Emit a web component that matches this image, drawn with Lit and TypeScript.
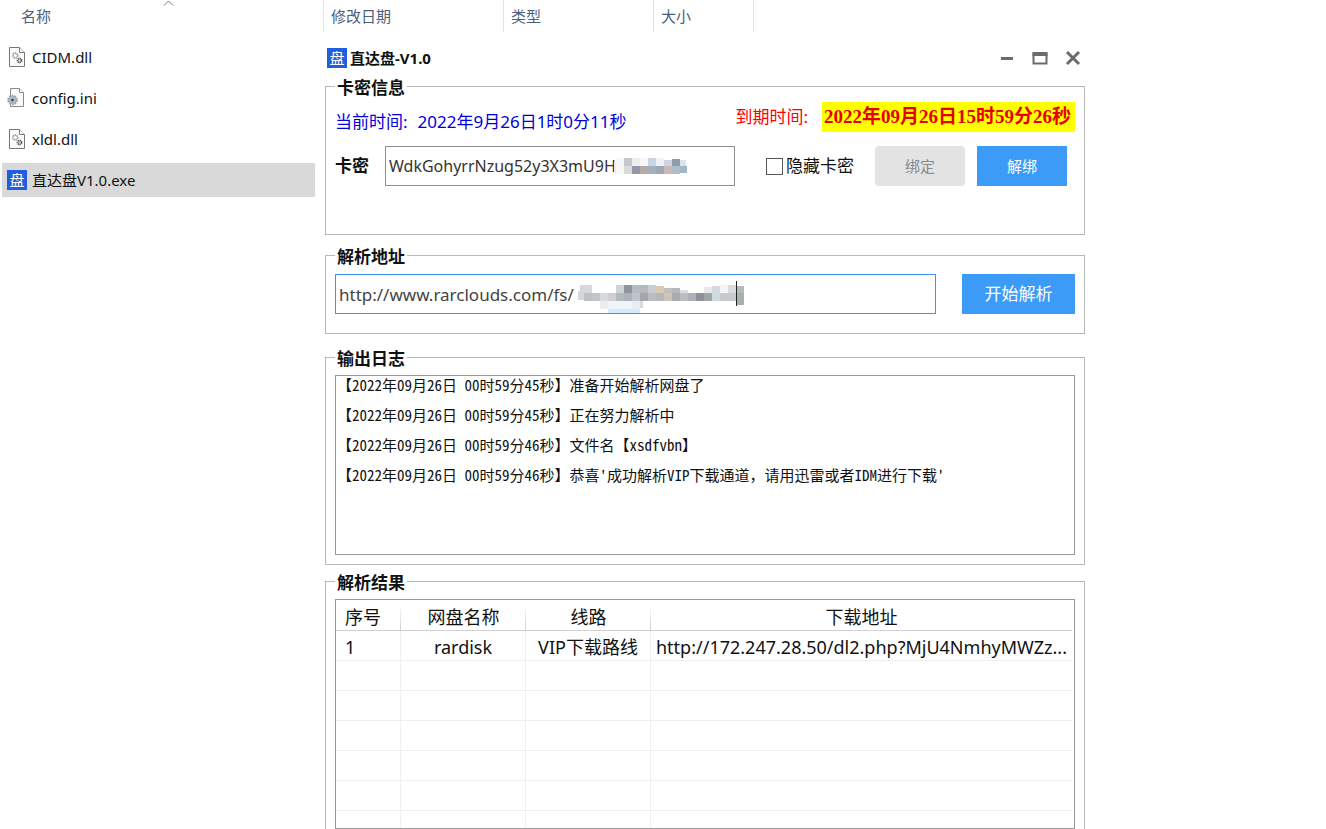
import { LitElement, html, css, svg } from "lit";
import { customElement } from "lit/decorators.js";

const dllIcon = html`<svg class="icon" viewBox="0 0 20 20" aria-hidden="true">
  <path d="M2.5 .5h10l5 5v14h-15z" fill="#fafafa" stroke="#777"/>
  <path d="M12.5 .5v5h5" fill="#fff" stroke="#777"/>
  <circle cx="8.300" cy="8.500" r="2.400" fill="none" stroke="#8d969c" stroke-width="1.600" stroke-dasharray="1.300 .6"/>
  <circle cx="12.500" cy="13.500" r="2" fill="#dde" stroke="#59636a" stroke-width="1.800" stroke-dasharray="1.200 .5"/>
</svg>`;

const iniIcon = html`<svg class="icon" viewBox="0 0 20 20" aria-hidden="true">
  <path d="M3.500 .5h9l4 4v14h-13z" fill="#fafafa" stroke="#8a8a8a"/>
  <path d="M12.500 .5v4h4" fill="#fff" stroke="#8a8a8a"/>
  <circle cx="5.500" cy="12" r="4.300" fill="#b9c5cb" stroke="#94a0a6" stroke-width="2" stroke-dasharray="1.700 1"/>
  <circle cx="5.500" cy="12" r="3.200" fill="#a9b8bf"/>
  <circle cx="5.500" cy="12" r="1.300" fill="#37454d"/>
</svg>`;

const brandIcon = html`<span class="brand" aria-hidden="true">盘</span>`;

const files = [
  { name: "CIDM.dll", icon: dllIcon },
  { name: "config.ini", icon: iniIcon },
  { name: "xldl.dll", icon: dllIcon },
  { name: "直达盘V1.0.exe", icon: brandIcon, selected: true },
];

const logs = [
  "【2022年09月26日 00时59分45秒】准备开始解析网盘了",
  "【2022年09月26日 00时59分45秒】正在努力解析中",
  "【2022年09月26日 00时59分46秒】文件名【xsdfvbn】",
  "【2022年09月26日 00时59分46秒】恭喜'成功解析VIP下载通道，请用迅雷或者IDM进行下载'",
];

type Block = [number, number, number, number, string];

const keyBlocks: Block[] = [
  [2, 4, 2, 12, "#e9ecee"], [4, 0, 8, 16, "#f7f7f8"],
  [12, 0, 8, 8, "#c3c7cb"], [20, 0, 8, 8, "#ededee"], [28, 0, 8, 8, "#f8f8f8"],
  [36, 0, 8, 8, "#c7d6e6"], [44, 0, 8, 8, "#eff1f4"], [52, 2, 8, 6, "#cdd4e0"],
  [60, 1, 8, 7, "#8f9da6"], [68, 2, 6, 6, "#d9e4ec"],
  [12, 8, 8, 8, "#dcd9da"], [20, 8, 8, 8, "#9497a6"], [28, 8, 8, 8, "#b5aca9"],
  [36, 8, 8, 8, "#a4b1bd"], [44, 8, 8, 8, "#9fa9b4"], [52, 8, 8, 8, "#c9b9bb"],
  [60, 8, 8, 8, "#b1bccb"], [68, 8, 7, 7, "#a3b6c8"],
];

// The last entry is the text caret.
const urlBlocks: Block[] = [
  [2, 4, 12, 8, "#d6d8da"], [38, 4, 8, 8, "#cdd3d6"], [46, 4, 8, 8, "#8f939c"],
  [54, 4, 8, 8, "#b5bbc0"], [62, 4, 8, 8, "#b4b9be"], [70, 4, 8, 8, "#c9ced2"],
  [78, 5, 8, 7, "#dccab5"], [86, 7, 8, 5, "#c0bfbb"], [94, 7, 8, 5, "#b7b7b7"],
  [102, 9, 8, 3, "#dcdddf"], [126, 6, 8, 6, "#e8e8e8"], [134, 5, 8, 7, "#d5d9df"],
  [142, 4, 8, 8, "#f4f4f4"], [150, 4, 8, 8, "#dcdcda"], [158, 5, 8, 7, "#b5baba"],
  [0, 10, 6, 9, "#d5d7da"], [6, 12, 8, 8, "#bcc1c6"], [14, 12, 8, 8, "#c1c6cb"],
  [22, 12, 8, 8, "#d8d9dc"], [30, 12, 8, 8, "#d0d0d2"], [38, 12, 8, 8, "#b7b8ba"],
  [46, 12, 8, 8, "#aeb2b5"], [54, 12, 8, 8, "#bfc5ca"], [62, 12, 8, 8, "#a4a5a8"],
  [70, 12, 8, 8, "#b8bdc2"], [78, 12, 8, 8, "#b5b7ba"], [86, 12, 8, 8, "#cdc4bb"],
  [94, 12, 8, 8, "#a8acb0"], [102, 12, 8, 8, "#bcbdc2"], [110, 12, 8, 8, "#adb0b4"],
  [118, 12, 8, 8, "#8f9098"], [126, 12, 8, 8, "#a0a4a7"], [134, 12, 8, 8, "#cfd9e0"],
  [142, 12, 8, 8, "#c8c9c9"], [150, 12, 8, 8, "#c6cbd2"], [158, 12, 8, 12, "#a9afaf"],
  [22, 20, 8, 8, "#ececec"], [30, 20, 8, 8, "#f0f4f7"], [38, 20, 16, 10, "#eff6fb"],
  [54, 20, 8, 10, "#e4eef6"], [62, 20, 3, 7, "#d7dade"], [30, 28, 32, 4, "#d4eafd"],
  [158, 0, 1, 25, "#222"],
];

const mosaic = (cls: string, w: number, h: number, blocks: Block[]) => html`
  <svg class=${cls} width=${w} height=${h} viewBox="0 0 ${w} ${h}" aria-hidden="true">
    ${blocks.map(([x, y, bw, bh, c]) => svg`<rect x=${x} y=${y} width=${bw} height=${bh} fill=${c}></rect>`)}
  </svg>`;

@customElement("app-root")
export class AppRoot extends LitElement {
  static styles = css`
    :host {
      display: block;
      height: 100vh;
      overflow: hidden;
      background: #fff;
      color: #111;
      font: 17px/24px "Noto Sans", "Noto Sans CJK SC", sans-serif;
    }
    * { box-sizing: border-box; }
    button, input { font: inherit; }
    .columns {
      display: grid;
      grid-template-columns: 323fr 180fr 150fr 100fr 573fr;
      height: 32px;
      color: #4c607a;
      font-size: 15px;
      line-height: 32px;
    }
    .columns span { padding-left: 7px; border-left: 1px solid #e2e2e2; }
    .columns .first { padding-left: 21px; border-left: 0; position: relative; }
    .sort { position: absolute; left: 163px; top: 0; display: block; }
    .body { display: grid; grid-template-columns: 325fr 760fr 241fr; }
    .files { margin: 0; padding: 8px 10px 0 2px; list-style: none; display: grid; gap: 7px; align-content: start; }
    .file { display: flex; align-items: center; gap: 5px; height: 34px; padding-left: 5px; font-size: 15px; }
    .file.selected { background: #d9d9d9; }
    .icon { width: 20px; height: 20px; flex: none; }
    .brand {
      width: 20px; height: 20px; flex: none;
      background: #1f5ee0; color: #fff;
      font-size: 15px; font-weight: 400; line-height: 20px; text-align: center;
    }
    .titlebar { display: flex; align-items: center; height: 42px; padding: 10px 0 0 2px; font-size: 15px; font-weight: 700; }
    .titlebar h1 { margin: 0 auto 0 3px; font: inherit; }
    .winbtn { width: 24px; height: 24px; margin-left: 9px; padding: 0; border: 0; background: none; display: grid; place-items: center; }
    fieldset { margin: 0; min-width: 0; padding: 0 9px; border: 1px solid #b8b8b8; }
    legend { padding: 4px 2px 0; font-weight: 700; line-height: 20px; }
    .card { padding-top: 4px; padding-bottom: 48px; }
    .address { margin-top: 8px; padding-top: 7px; padding-bottom: 19px; }
    .output { margin-top: 11px; padding-top: 6px; padding-bottom: 9px; }
    .result { margin-top: 4px; padding-top: 6px; padding-bottom: 9px; }
    .times { display: flex; align-items: end; height: 30px; margin-bottom: 14px; }
    .now { color: #00d; display: flex; gap: 10px; margin-right: auto; line-height: 20px; }
    .until { color: #f00; display: flex; gap: 14px; align-items: center; }
    .until mark {
      padding: 0 4px 0 2px; background: #ff0; color: #e60000;
      font: 700 19px/30px "Liberation Serif", "Noto Sans CJK SC", serif;
    }
    .row { display: flex; align-items: center; }
    .keylabel { width: 50px; font-weight: 700; }
    .box { flex: 1; position: relative; height: 40px; }
    .box input { display: block; width: 100%; height: 40px; padding: 0 3px; border: 1px solid #8f8f8f; background: #fff; color: #333; outline: 0; }
    .box .key { font-size: 16px; }
    .box .url { border-color: #3d94f0; color: #444; }
    .keymask { position: absolute; left: 227px; top: 12px; }
    .urlmask { position: absolute; left: 243px; top: 7px; }
    .check { display: flex; align-items: center; gap: 3px; margin: 0 21px 0 31px; }
    .check input { appearance: none; width: 17px; height: 17px; margin: 0; border: 1px solid #555; background: #fff; }
    .btn { height: 40px; border: 0; padding: 0; background: #3d9bf8; color: #fff; }
    .small { width: 90px; font-size: 15px; }
    .small:disabled { background: #e3e3e3; color: #8a8a8a; border-radius: 4px; margin-right: 12px; }
    .unbind { margin-right: 8px; }
    .start { width: 113px; margin-left: 26px; }
    .log {
      margin: 0; padding: 0 1px; list-style: none; height: 180px; border: 1px solid #999;
      display: grid; gap: 12px; align-content: start;
      font: 15px/18px "Noto Sans Mono CJK SC", "Noto Sans CJK SC", monospace;
    }
    .log li { white-space: pre; }
    .grid { height: 230px; overflow: hidden; border: 1px solid #999; padding-right: 2px; }
    table { width: 100%; border-collapse: separate; border-spacing: 0; table-layout: fixed; font-size: 18px; }
    .c1 { width: 65px; } .c2, .c3 { width: 125px; }
    th, td { height: 30px; padding: 2px 4px 0; font-weight: 400; text-align: center; overflow: hidden; white-space: nowrap; text-overflow: ellipsis; border-bottom: 1px solid #efefef; border-right: 1px solid #efefef; }
    th {
      height: 31px; padding-top: 4px; border-bottom-color: #d0d0d0; border-right: 0;
      background: linear-gradient(#fff, #ccc) no-repeat right bottom / 1px 25px;
    }
    th:first-child, td:first-child { text-align: left; padding-left: 9px; }
    th:last-child, td:last-child { border-right: 0; background: none; }
  `;

  render() {
    return html`
      <header class="columns">
        <span class="first">名称
          <svg class="sort" width="11" height="7" viewBox="0 0 11 7" aria-hidden="true"><path d="M1 5.500 5.500 1 10 5.500" fill="none" stroke="#777"/></svg>
        </span>
        <span>修改日期</span><span>类型</span><span>大小</span><span></span>
      </header>
      <div class="body">
        <ul class="files">
          ${files.map((f) => html`<li class="file ${f.selected ? "selected" : ""}">${f.icon}${f.name}</li>`)}
        </ul>
        <main>
          <div class="titlebar">
            ${brandIcon}
            <h1>直达盘-V1.0</h1>
            <button class="winbtn" aria-label="最小化"><svg width="16" height="16"><path d="M2 8.500h12" stroke="#6b6b6b" stroke-width="3"/></svg></button>
            <button class="winbtn" aria-label="最大化"><svg width="16" height="16"><path d="M1.500 3v10.500h13V3" fill="none" stroke="#6b6b6b" stroke-width="2"/><path d="M.5 4h15" stroke="#6b6b6b" stroke-width="4"/></svg></button>
            <button class="winbtn" aria-label="关闭"><svg width="16" height="16"><path d="M2 2l12 12M14 2 2 14" stroke="#6b6b6b" stroke-width="3"/></svg></button>
          </div>
          <fieldset class="card">
            <legend>卡密信息</legend>
            <div class="times">
              <div class="now"><span>当前时间:</span><span>2022年9月26日1时0分11秒</span></div>
              <div class="until"><span>到期时间:</span><mark>2022年09月26日15时59分26秒</mark></div>
            </div>
            <div class="row">
              <label class="keylabel" for="key">卡密</label>
              <div class="box">
                <input id="key" class="key" type="text" value="WdkGohyrrNzug52y3X3mU9H." />
                ${mosaic("keymask", 76, 16, keyBlocks)}
              </div>
              <label class="check"><input type="checkbox" />隐藏卡密</label>
              <button class="btn small" disabled>绑定</button>
              <button class="btn small unbind">解绑</button>
            </div>
          </fieldset>
          <fieldset class="address">
            <legend>解析地址</legend>
            <div class="row">
              <div class="box">
                <input class="url" type="text" aria-label="解析地址" value="http://www.rarclouds.com/fs/" />
                ${mosaic("urlmask", 166, 32, urlBlocks)}
              </div>
              <button class="btn start">开始解析</button>
            </div>
          </fieldset>
          <fieldset class="output">
            <legend>输出日志</legend>
            <ul class="log">${logs.map((l) => html`<li>${l}</li>`)}</ul>
          </fieldset>
          <fieldset class="result">
            <legend>解析结果</legend>
            <div class="grid">
              <table>
                <colgroup><col class="c1" /><col class="c2" /><col class="c3" /><col /></colgroup>
                <thead><tr><th>序号</th><th>网盘名称</th><th>线路</th><th>下载地址</th></tr></thead>
                <tbody>
                  <tr><td>1</td><td>rardisk</td><td>VIP下载路线</td><td>http://172.247.28.50/dl2.php?MjU4NmhyMWZz...</td></tr>
                  ${Array.from({ length: 6 }, () => html`<tr><td></td><td></td><td></td><td></td></tr>`)}
                </tbody>
              </table>
            </div>
          </fieldset>
        </main>
      </div>
    `;
  }
}
